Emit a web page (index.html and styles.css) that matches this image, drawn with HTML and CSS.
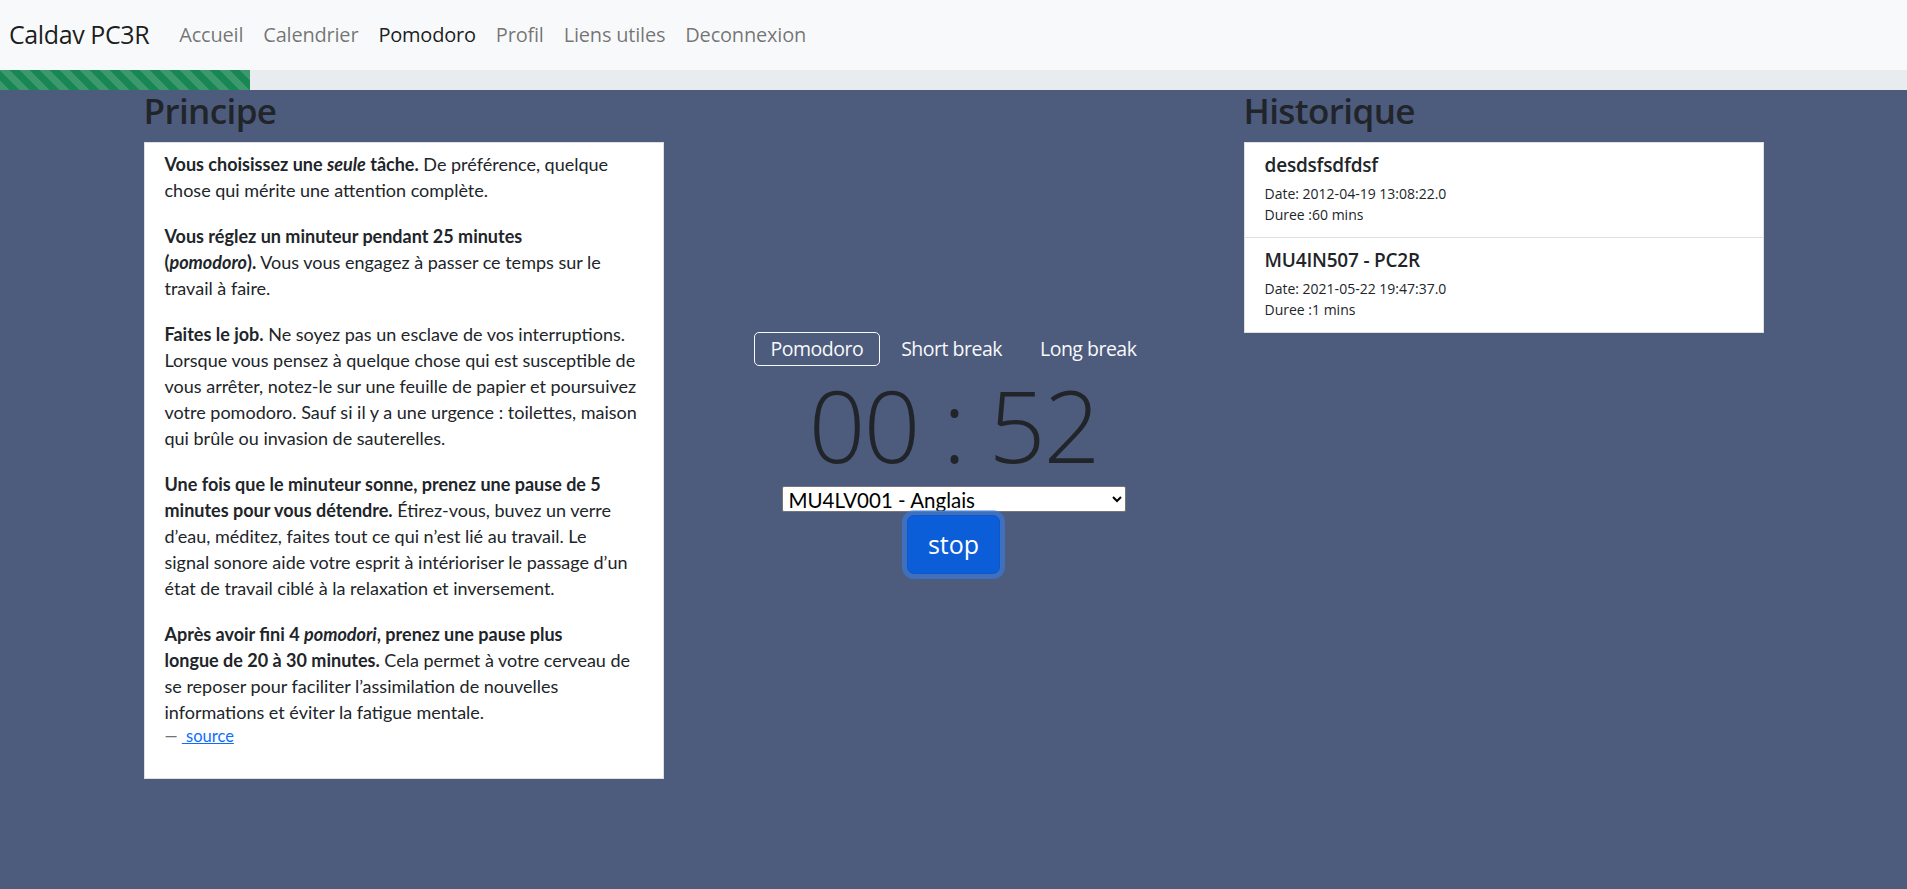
FILE: index.html
```html
<!DOCTYPE html>
<html lang="fr">
<head>
<meta charset="utf-8">
<title>Pomodoro - Caldav PC3R</title>
<link rel="stylesheet" href="styles.css">
</head>
<body>
<nav class="navbar">
  <a class="brand" href="#">Caldav PC3R</a>
  <ul class="nav">
    <li><a class="nav-link" href="#">Accueil</a></li>
    <li><a class="nav-link" href="#">Calendrier</a></li>
    <li><a class="nav-link active" href="#">Pomodoro</a></li>
    <li><a class="nav-link" href="#">Profil</a></li>
    <li><a class="nav-link" href="#">Liens utiles</a></li>
    <li><a class="nav-link" href="#">Deconnexion</a></li>
  </ul>
</nav>
<div class="progress"><div class="progress-bar" style="width:13.11%"></div></div>
<main class="main">
  <div class="container">
    <section class="col">
      <h3 class="title">Principe</h3>
      <div class="card">
        <figure class="quote">
          <blockquote>
            <p><strong>Vous choisissez une <em>seule</em> tâche.</strong> De préférence, quelque<br>chose qui mérite une attention complète.</p>
            <p><strong>Vous réglez un minuteur pendant 25 minutes<br>(<em>pomodoro</em>).</strong> Vous vous engagez à passer ce temps sur le<br>travail à faire.</p>
            <p><strong>Faites le job.</strong> Ne soyez pas un esclave de vos interruptions.<br>Lorsque vous pensez à quelque chose qui est susceptible de<br>vous arrêter, notez-le sur une feuille de papier et poursuivez<br>votre pomodoro. Sauf si il y a une urgence : toilettes, maison<br>qui brûle ou invasion de sauterelles.</p>
            <p><strong>Une fois que le minuteur sonne, prenez une pause de 5<br>minutes pour vous détendre.</strong> Étirez-vous, buvez un verre<br>d’eau, méditez, faites tout ce qui n’est lié au travail. Le<br>signal sonore aide votre esprit à intérioriser le passage d’un<br>état de travail ciblé à la relaxation et inversement.</p>
            <p><strong>Après avoir fini 4 <em>pomodori</em>, prenez une pause plus<br>longue de 20 à 30 minutes.</strong> Cela permet à votre cerveau de<br>se reposer pour faciliter l’assimilation de nouvelles<br>informations et éviter la fatigue mentale.</p>
          </blockquote>
          <figcaption class="quote-footer">&mdash; <a href="#">&nbsp;source</a></figcaption>
        </figure>
      </div>
    </section>
    <section class="col col-center">
      <div class="tabs">
        <button class="tab active" type="button">Pomodoro</button>
        <button class="tab" type="button">Short break</button>
        <button class="tab" type="button">Long break</button>
      </div>
      <div class="timer">00 : 52</div>
      <select class="task">
        <option>MU4LV001 - Anglais</option>
      </select>
      <button class="stop" type="button">stop</button>
    </section>
    <section class="col">
      <h3 class="title">Historique</h3>
      <ul class="history">
        <li class="item">
          <h6 class="item-title">desdsfsdfdsf</h6>
          <div class="item-line">Date: 2012-04-19 13:08:22.0</div>
          <div class="item-line">Duree :60 mins</div>
        </li>
        <li class="item">
          <h6 class="item-title">MU4IN507 - PC2R</h6>
          <div class="item-line">Date: 2021-05-22 19:47:37.0</div>
          <div class="item-line">Duree :1 mins</div>
        </li>
      </ul>
    </section>
  </div>
</main>
</body>
</html>
```

FILE: styles.css
```css
* { box-sizing: border-box; }

html, body {
  margin: 0;
  padding: 0;
}

body {
  font-family: "Open Sans", "Noto Sans", sans-serif;
  font-size: 20px;
  line-height: 1.5;
  color: #212529;
  background: #4d5b7d;
  min-height: 889px;
}

/* Navbar */
.navbar {
  display: flex;
  align-items: center;
  height: 70px;
  padding: 0 9px;
  background: #f8f9fa;
}

.brand {
  font-size: 25px;
  line-height: 1.5;
  color: rgba(0, 0, 0, 0.9);
  text-decoration: none;
  margin-right: 20px;
  letter-spacing: -0.4px;
}

.nav {
  display: flex;
  list-style: none;
  margin: 0;
  padding: 0;
}

.nav-link {
  display: block;
  padding: 10px 10px;
  font-size: 20px;
  line-height: 30px;
  color: rgba(0, 0, 0, 0.55);
  text-decoration: none;
  letter-spacing: -0.2px;
}

.nav-link.active {
  color: rgba(0, 0, 0, 0.9);
}

/* Progress */
.progress {
  height: 20px;
  background: #e9ecef;
  display: flex;
}

.progress-bar {
  height: 100%;
  background-color: #198754;
  background-image: linear-gradient(45deg,
    rgba(255, 255, 255, 0.15) 25%, transparent 25%,
    transparent 50%, rgba(255, 255, 255, 0.15) 50%,
    rgba(255, 255, 255, 0.15) 75%, transparent 75%, transparent);
  background-size: 20px 20px;
}

/* Layout */
.main {
  background: #4d5b7d;
}

.container {
  width: 1650px;
  margin: 0 auto;
  display: flex;
}

.col {
  flex: 0 0 550px;
  padding: 0 15px;
}

.title {
  margin: 0 0 10px;
  font-size: 35px;
  font-weight: 600;
  line-height: 42px;
  letter-spacing: -0.6px;
  color: #212529;
}

/* Principe card */
.card {
  background: #fff;
  border: 1px solid rgba(0, 0, 0, 0.125);
  padding: 8px 20px 30px;
}

.quote {
  margin: 0;
}

.quote blockquote {
  margin: 0;
  font-family: Lato, "Open Sans", sans-serif;
  font-size: 18px;
  line-height: 26px;
}

.quote p {
  margin: 0 0 20px;
  white-space: nowrap;
}

.quote p:last-child {
  margin-bottom: 0;
}

.quote strong {
  font-weight: 700;
}

.quote-footer {
  font-family: Lato, "Open Sans", sans-serif;
  font-size: 16.5px;
  line-height: 23px;
  color: #6c757d;
}

.quote-footer a {
  color: #0d6efd;
  text-decoration: underline;
}

/* Center column */
.col-center {
  display: flex;
  flex-direction: column;
  align-items: center;
  padding-top: 242px;
}

.tabs {
  display: flex;
  gap: 4px;
}

.tab {
  font-family: inherit;
  font-size: 19.5px;
  letter-spacing: -0.5px;
  line-height: 30px;
  padding: 1px 16px;
  background: transparent;
  border: 1px solid transparent;
  border-radius: 5px;
  color: #f8f9fa;
  cursor: pointer;
}

.tab.active {
  border-color: #f8f9fa;
}

.timer {
  font-size: 100px;
  font-weight: 300;
  line-height: 120px;
  color: #212529;
  margin-top: -2px;
  letter-spacing: -2px;
}

.task {
  width: 344px;
  height: 26px;
  margin-top: 2px;
  font-family: Lato, "Open Sans", sans-serif;
  font-size: 20.5px;
  line-height: 24px;
  color: #000;
  background: #fff;
  border: 1px solid #767676;
  border-radius: 2px;
  padding: 0 2px;
}

.stop {
  margin-top: 3px;
  font-family: inherit;
  font-size: 25px;
  line-height: 37px;
  padding: 10px 20px;
  color: #fff;
  background: #0b5ed7;
  border: 1px solid #0a58ca;
  border-radius: 7px;
  box-shadow: 0 0 0 5px rgba(49, 132, 253, 0.5);
  cursor: pointer;
}

/* History */
.history {
  list-style: none;
  margin: 0;
  padding: 0;
  background: #fff;
  border: 1px solid rgba(0, 0, 0, 0.125);
}

.item {
  padding: 10px 20px 12px;
}

.item + .item {
  border-top: 1px solid rgba(0, 0, 0, 0.125);
}

.item-title {
  margin: 0 0 6px;
  font-size: 19px;
  font-weight: 600;
  line-height: 24px;
  letter-spacing: -0.2px;
}

.item-line {
  font-size: 14px;
  line-height: 21px;
}
```
